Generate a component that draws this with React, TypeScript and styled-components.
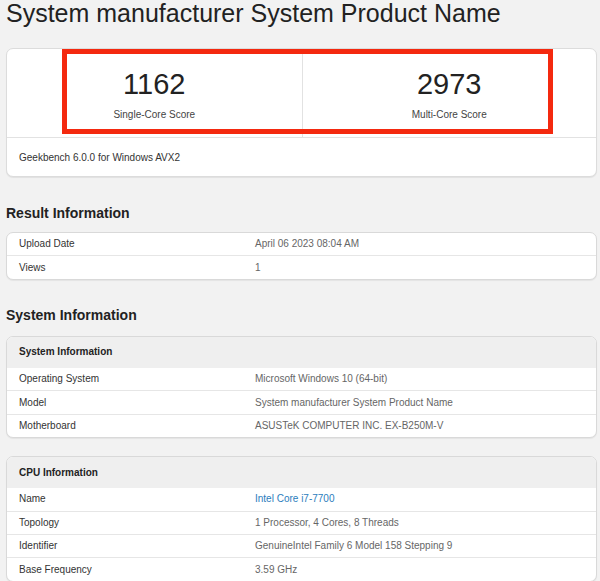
import React from "react";
import styled, { createGlobalStyle } from "styled-components";

const Global = createGlobalStyle`
  html, body { margin: 0; padding: 0; background: #f2f2f2; }
  body { font-family: "Liberation Sans", Arial, sans-serif; color: #222; }
`;

const Page = styled.div`
  padding: 0 3px 0 6px;
  width: 600px;
  box-sizing: border-box;
`;

const Title = styled.h1`
  margin: 0;
  font-size: 25px;
  line-height: 26px;
  font-weight: 400;
  color: #222;
`;

const ScoreCard = styled.div`
  position: relative;
  margin-top: 22px;
  background: #fff;
  border: 1px solid #dcdcdc;
  border-radius: 7px;
  box-shadow: 0 1px 1px rgba(0, 0, 0, 0.07);
`;

const ScoreRow = styled.div`
  display: grid;
  grid-template-columns: 1fr 1fr;
  border-bottom: 1px solid #e2e2e2;
`;

const ScoreCell = styled.div<{ $divider?: boolean }>`
  text-align: center;
  padding: 19px 0 15px;
  border-left: ${(p) => (p.$divider ? "1px solid #e2e2e2" : "none")};
`;

const ScoreValue = styled.div`
  font-size: 29px;
  line-height: 32px;
  color: #222;
`;

const ScoreLabel = styled.div`
  margin-top: 8px;
  font-size: 10px;
  line-height: 14px;
  color: #444;
`;

const CardFooter = styled.div`
  padding: 12.5px 12px 11.5px;
  font-size: 10px;
  line-height: 14px;
  color: #333;
`;

const Highlight = styled.div`
  position: absolute;
  left: 55px;
  top: 0px;
  width: 491px;
  height: 85px;
  box-sizing: border-box;
  border: 5px solid #f4290f;
  pointer-events: none;
`;

const Section = styled.section<{ $top: number }>`
  margin-top: ${(p) => p.$top}px;
`;

const SectionTitle = styled.h2<{ $gap?: number }>`
  margin: 0 0 ${(p) => p.$gap ?? 10}px;
  font-size: 14px;
  line-height: 18px;
  font-weight: 700;
  color: #222;
`;

const Table = styled.div<{ $gap?: number }>`
  background: #fff;
  border: 1px solid #d9d9d9;
  border-radius: 7px;
  overflow: hidden;
  margin-top: ${(p) => p.$gap ?? 0}px;
  box-shadow: 0 1px 1px rgba(0, 0, 0, 0.06);
`;

const TableHead = styled.div`
  background: #efefef;
  padding: 8.6px 12px;
  font-size: 10px;
  line-height: 14px;
  font-weight: 700;
  color: #222;
`;

const Row = styled.div`
  display: grid;
  grid-template-columns: 236px 1fr;
  padding: 4.2px 12px;
  font-size: 10px;
  line-height: 14px;
  & + & {
    border-top: 1px solid #e6e6e6;
  }
`;

const Label = styled.div`
  color: #333;
`;

const Value = styled.div<{ $link?: boolean }>`
  color: ${(p) => (p.$link ? "#2b7dbd" : "#666")};
`;

type Item = { k: string; v: string; link?: boolean };

const InfoRows = ({ items }: { items: Item[] }) => (
  <>
    {items.map((it) => (
      <Row key={it.k}>
        <Label>{it.k}</Label>
        <Value $link={it.link}>{it.v}</Value>
      </Row>
    ))}
  </>
);

export default function App() {
  return (
    <Page>
      <Global />
      <Title>System manufacturer System Product Name</Title>
      <ScoreCard>
        <ScoreRow>
          <ScoreCell>
            <ScoreValue>1162</ScoreValue>
            <ScoreLabel>Single-Core Score</ScoreLabel>
          </ScoreCell>
          <ScoreCell $divider>
            <ScoreValue>2973</ScoreValue>
            <ScoreLabel>Multi-Core Score</ScoreLabel>
          </ScoreCell>
        </ScoreRow>
        <CardFooter>Geekbench 6.0.0 for Windows AVX2</CardFooter>
        <Highlight />
      </ScoreCard>

      <Section $top={27}>
        <SectionTitle>Result Information</SectionTitle>
        <Table>
          <InfoRows
            items={[
              { k: "Upload Date", v: "April 06 2023 08:04 AM" },
              { k: "Views", v: "1" },
            ]}
          />
        </Table>
      </Section>

      <Section $top={26}>
        <SectionTitle $gap={12}>System Information</SectionTitle>
        <Table>
          <TableHead>System Information</TableHead>
          <InfoRows
            items={[
              { k: "Operating System", v: "Microsoft Windows 10 (64-bit)" },
              { k: "Model", v: "System manufacturer System Product Name" },
              { k: "Motherboard", v: "ASUSTeK COMPUTER INC. EX-B250M-V" },
            ]}
          />
        </Table>
        <Table $gap={18}>
          <TableHead>CPU Information</TableHead>
          <InfoRows
            items={[
              { k: "Name", v: "Intel Core i7-7700", link: true },
              { k: "Topology", v: "1 Processor, 4 Cores, 8 Threads" },
              { k: "Identifier", v: "GenuineIntel Family 6 Model 158 Stepping 9" },
              { k: "Base Frequency", v: "3.59 GHz" },
            ]}
          />
        </Table>
      </Section>
    </Page>
  );
}
